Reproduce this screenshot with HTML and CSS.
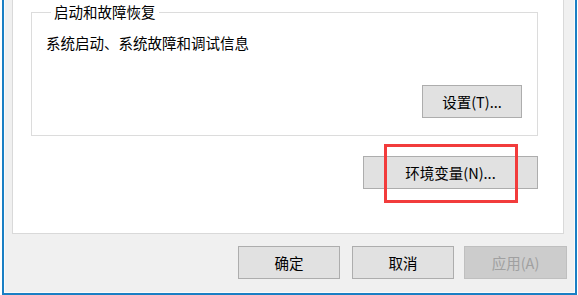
FILE: index.html
```html
<!DOCTYPE html>
<html lang="zh-CN">
<head>
<meta charset="utf-8">
<link rel="stylesheet" href="styles.css">
</head>
<body>
<div class="window">
  <div class="inner">
    <div class="panel">
      <fieldset class="group">
        <legend class="group-title">启动和故障恢复</legend>
        <p class="desc">系统启动、系统故障和调试信息</p>
        <div class="group-actions">
          <button class="btn btn-settings">设置(T)...</button>
        </div>
      </fieldset>
      <div class="env-row">
        <div class="env-wrap">
          <button class="btn btn-env">环境变量(N)...</button>
          <div class="highlight"></div>
        </div>
      </div>
    </div>
    <div class="footer">
      <button class="btn btn-foot btn-ok">确定</button>
      <button class="btn btn-foot btn-cancel">取消</button>
      <button class="btn btn-foot btn-apply" disabled>应用(A)</button>
    </div>
  </div>
</div>
</body>
</html>
```
FILE: styles.css
```css
* { box-sizing: border-box; }
html, body {
  margin: 0;
  padding: 0;
  background: #ffffff;
  width: 578px;
  height: 295px;
  overflow: hidden;
  font-family: "Noto Sans CJK SC", "Noto Sans", sans-serif;
  font-size: 14.5px;
  line-height: 20px;
  color: #000;
}
.window {
  margin-left: 2px;
  width: 575px;
  height: 295px;
  border: 2px solid #1a7fc4;
  border-top: none;
  display: flex;
}
.inner {
  flex: 1;
  background: #f0f0f0;
  border: 1px solid #fafafa;
  border-top: none;
  padding-left: 7px;
  padding-right: 10px;
  display: flex;
  flex-direction: column;
}
.panel {
  position: relative;
  height: 234px;
  background: #fff;
  border: 1px solid #d9d9d9;
  border-top: none;
  padding: 0 25px 0 18px;
}
.group {
  margin: 2px 0 0 0;
  padding: 0 15px 17px 14px;
  border: 1px solid #dcdcdc;
  min-width: 0;
}
.group-title {
  margin-left: 5px;
  padding: 0 3px;
  font-size: 14.5px;
  line-height: 20px;
  color: #000;
}
.desc {
  margin: 0;
  padding-top: 11px;
  line-height: 20px;
}
.group-actions {
  display: flex;
  justify-content: flex-end;
  margin-top: 32px;
}
.btn {
  font-family: inherit;
  font-size: 14.5px;
  line-height: 20px;
  color: #000;
  background: #e1e1e1;
  border: 1px solid #adadad;
  border-radius: 0;
  padding: 0;
  height: 33px;
  margin: 0;
}
.btn-settings { width: 100px; }
.env-row {
  display: flex;
  justify-content: flex-end;
  margin-top: 20px;
}
.env-wrap { position: relative; }
.btn-env { width: 175px; }
.highlight {
  position: absolute;
  left: 21px;
  top: -12px;
  width: 134px;
  height: 59px;
  border: 3px solid #f23c3c;
  pointer-events: none;
}
.footer {
  display: flex;
  justify-content: flex-end;
  margin-top: 12px;
  margin-right: -3px;
}
.btn-foot { width: 102px; }
.btn-ok { margin-right: 12px; }
.btn-cancel { margin-right: 10px; }
.btn-apply {
  width: 103px;
  background: #cccccc;
  border-color: #bfbfbf;
  color: #a0a0a0;
}
```
